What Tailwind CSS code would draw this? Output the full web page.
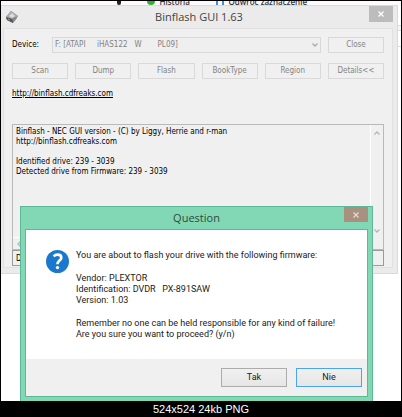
<!DOCTYPE html>
<html lang="en">
<head>
  <meta charset="UTF-8" />
  <meta name="viewport" content="width=device-width, initial-scale=1.0"/>
  <title>Binflash GUI 1.63</title>
  <script src="https://cdn.jsdelivr.net/npm/@tailwindcss/browser@4"></script>
</head>
<body class="bg-black min-h-screen flex flex-col font-['Open_Sans',sans-serif]">

  <main class="relative flex-1 mx-px mt-px bg-white overflow-hidden">

    <!-- Toolbar of the window behind -->
    <div class="flex h-1 items-end justify-between overflow-hidden bg-[#fdf9fd] pr-[94px] pl-[116px] text-[8px] leading-[6px] font-semibold text-[#333]">
      <span class="h-1 w-1 rounded-b-full bg-[#222]"></span>
      <span class="flex items-end gap-1"><i class="h-1 w-2 rounded-b-full bg-[#2fae2f]"></i>Historia</span>
      <span class="flex items-end gap-1"><i class="h-1 w-2 border-x-2 border-[#3b8fd8]"></i>Odwróć zaznaczenie</span>
    </div>

    <!-- Main window -->
    <div class="flex">
      <section class="flex-1 border border-l-0 border-[#dadada] bg-[#ebebeb] pb-[5px]">
        <header class="relative flex h-[22px] items-center justify-center">
          <svg class="absolute top-1 left-1 size-[14px]" viewBox="0 0 14 14">
            <path d="M1 7 6 1 13 6 8 13 2 10Z" fill="#777"/>
            <path d="M1 7 6 1 13 6 7 9Z" fill="#aaa"/>
            <path d="M4 6 7 3 10 6 7 8Z" fill="#dcdcdc"/>
            <path d="M1 7 7 9 8 13 2 10Z" fill="#555"/>
            <path d="M8 10 12 7 12 8 9 12Z" fill="#8a8fa8"/>
            <path d="M3 9 5 10" stroke="#93a96b"/>
          </svg>
          <h1 class="text-[11px] text-[#444]">Binflash GUI 1.63</h1>
          <button aria-label="Close window" class="absolute top-0 right-1 flex h-4 w-6 items-center justify-center bg-[#bcbcbc]">
            <svg class="size-[6px]" viewBox="0 0 6 6"><path d="M.5.5 5.5 5.5M5.5.5.5 5.5" stroke="#fff" stroke-width="1.3"/></svg>
          </button>
        </header>

        <div class="mr-[4px] ml-[2px] border border-[#e0e0e0] bg-[#f0f0f0] px-2 pt-2 pb-px font-['DejaVu_Sans_Condensed','DejaVu_Sans',sans-serif] text-[8px] text-black">
          <div class="flex items-center">
            <label for="device" class="w-10">Device:</label>
            <div class="relative mr-[7px] flex-1">
              <select id="device" disabled class="block h-4 w-full appearance-none border border-[#d9d9d9] bg-[#efefef] pl-[2px] text-[#838383] opacity-100">
                <option>F: [ATAPI &nbsp;&nbsp;&nbsp; iHAS122 &nbsp; W &nbsp;&nbsp;&nbsp;&nbsp;&nbsp; PL09]</option>
              </select>
              <svg class="absolute top-[6px] right-[3px] h-1 w-[6px]" viewBox="0 0 6 4"><path d="M.5.5 3 3 5.5.5" fill="none" stroke="#aaa" stroke-width="1.3"/></svg>
            </div>
            <button disabled class="h-4 w-14 border border-[#d9d9d9] text-[#838383]">Close</button>
          </div>

          <div class="mt-[10px] grid grid-cols-6 gap-[7px] text-[#838383]">
            <button disabled class="h-4 border border-[#d9d9d9]">Scan</button>
            <button disabled class="h-4 border border-[#d9d9d9]">Dump</button>
            <button disabled class="h-4 border border-[#d9d9d9]">Flash</button>
            <button disabled class="h-4 border border-[#d9d9d9]">BookType</button>
            <button disabled class="h-4 border border-[#d9d9d9]">Region</button>
            <button disabled class="h-4 border border-[#d9d9d9]">Details&lt;&lt;</button>
          </div>

          <a href="http://binflash.cdfreaks.com" class="mt-[9px] block leading-3 underline">http://binflash.cdfreaks.com</a>

          <div class="mt-6 flex h-[126px] border border-[#b9b9b9]">
            <div class="flex flex-1 flex-col justify-between">
              <div class="px-[3px] pt-[2px] leading-[10px]">
                <p>Binflash - NEC GUI version - (C) by Liggy, Herrie and r-man</p>
                <p>http://binflash.cdfreaks.com</p>
                <p class="mt-[10px]">Identified drive: 239 - 3039</p>
                <p>Detected drive from Firmware: 239 - 3039</p>
              </div>
              <div class="flex h-3 items-center border-t border-white pl-1">
                <svg class="h-[6px] w-1" viewBox="0 0 4 6"><path d="M3.5.5 1 3 3.5 5.5" fill="none" stroke="#b5b5b5" stroke-width="1.3"/></svg>
              </div>
            </div>
            <div class="flex w-[13px] flex-col items-center justify-between border-l border-white pt-[6px] pb-4">
              <svg class="h-1 w-[6px]" viewBox="0 0 6 4"><path d="M.5 3.5 3 1 5.5 3.5" fill="none" stroke="#b5b5b5" stroke-width="1.3"/></svg>
              <svg class="h-1 w-[6px]" viewBox="0 0 6 4"><path d="M.5.5 3 3 5.5.5" fill="none" stroke="#b5b5b5" stroke-width="1.3"/></svg>
            </div>
          </div>
          <input type="text" value="D" aria-label="Status" readonly class="block h-4 w-full border border-[#9a9a9a] pl-[3px]"/>
        </div>
      </section>
      <!-- Edge of the window behind -->
      <div class="w-[3px] pt-5">
        <div class="h-[6px] border-y border-[#dcdcdc] bg-[#f6f6f6]"></div>
        <div class="h-4 border-b border-[#dcdcdc]"></div>
      </div>
    </div>

    <!-- Question dialog -->
    <section role="dialog" aria-labelledby="question" class="absolute top-[205px] right-[28px] bottom-0 left-[19px] flex flex-col border border-b-0 border-[#5cb995] bg-[#82d8b5] px-1 pb-1">
      <header class="relative flex h-[22px] items-center justify-center">
        <h2 id="question" class="text-[11px] text-[#2c4a3e]">Question</h2>
        <button aria-label="Close dialog" class="absolute top-0 right-0 flex h-[15px] w-6 items-center justify-center bg-[#a8917f]">
          <svg class="size-[6px]" viewBox="0 0 6 6"><path d="M.5.5 5.5 5.5M5.5.5.5 5.5" stroke="#e4dcd4" stroke-width="1.2"/></svg>
        </button>
      </header>
      <div class="flex flex-1 flex-col border border-[#5cb995] bg-white font-['Roboto',sans-serif] text-[9px] text-[#1a1a1a]">
        <div class="flex flex-1 gap-[7px] pt-5 pl-5">
          <svg class="size-[23px]" viewBox="0 0 23 23">
            <circle cx="11.5" cy="11.5" r="11.5" fill="#1a79cc"/>
            <path d="M7.6 6.4C8.8 5.200 10.200 4.700 11.700 4.700C14 4.700 15.300 5.900 15.300 7.700C15.300 10.500 11.500 10.800 11.500 14.200" fill="none" stroke="#fff" stroke-width="2.700"/>
            <circle cx="11.500" cy="17.600" r="1.700" fill="#fff"/>
          </svg>
          <div class="leading-[11px]">
            <p>You are about to flash your drive with the following firmware:</p>
            <p class="mt-3">Vendor: PLEXTOR</p>
            <p>Identification: DVDR &nbsp; PX-891SAW</p>
            <p>Version: 1.03</p>
            <p class="mt-3">Remember no one can be held responsible for any kind of failure!</p>
            <p>Are you sure you want to proceed? (y/n)</p>
          </div>
        </div>
        <footer class="flex h-[37px] items-center justify-end gap-[9px] bg-[#f0f0f0] pr-[5px]">
          <button class="h-[19px] w-[66px] border border-[#acacac] bg-linear-to-b from-[#f0f0f0] to-[#e6e6e6]">Tak</button>
          <button class="h-[19px] w-[66px] border border-[#4ba3f5] bg-linear-to-b from-[#f0f0f0] to-[#e6e6e6]">Nie</button>
        </footer>
      </div>
    </section>
  </main>

  <footer class="h-4 text-center font-['Liberation_Sans',sans-serif] text-[11px] leading-4 text-white">524x524 24kb PNG</footer>

</body>
</html>
